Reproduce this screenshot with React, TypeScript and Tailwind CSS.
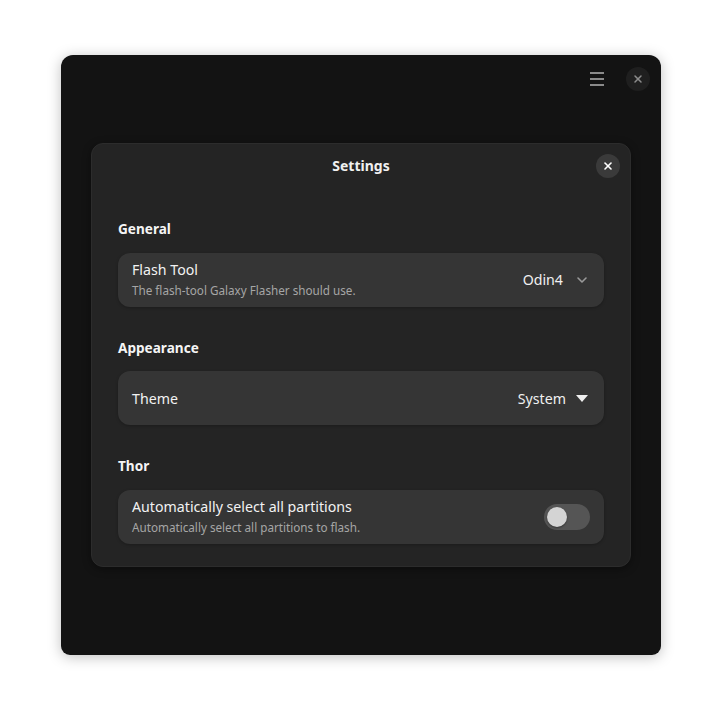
import { X, ChevronDown } from "lucide-react"

function SectionTitle({ children }: { children: string }) {
  return <h2 className="text-[13.6px] font-bold text-[#f5f5f5] leading-none mb-[17px]">{children}</h2>
}

function Row({ title, subtitle, children }: { title: string; subtitle?: string; children: React.ReactNode }) {
  return (
    <div className="flex h-[54px] items-center justify-between rounded-[12px] bg-[#353535] pl-[14px] pr-[14px] shadow-[0_1px_3px_rgba(0,0,0,0.25)]">
      <div className="flex flex-col">
        <span className="text-[14.2px] leading-[19px] text-[#f2f2f2]">{title}</span>
        {subtitle && <span className="mt-[3px] text-[11.7px] leading-[17px] text-[#a6a6a6]">{subtitle}</span>}
      </div>
      {children}
    </div>
  )
}

export default function App() {
  return (
    <div
      className="flex h-[722px] w-[722px] items-start justify-center bg-white pt-[55px]"
      style={{ fontFamily: '"Noto Sans", "Open Sans", sans-serif' }}
    >
      <div className="flex h-[600px] w-[600px] flex-col rounded-t-[12px] rounded-b-[9px] bg-[#131313] shadow-[0_2px_14px_rgba(0,0,0,0.25)]">
        {/* header bar */}
        <div className="flex h-[46px] items-center justify-end gap-[22px] pr-[11px] pt-[2px]">
          <div className="flex flex-col gap-[4px]">
            <span className="block h-[2px] w-[14px] bg-[#8a8a8a]" />
            <span className="block h-[2px] w-[14px] bg-[#8a8a8a]" />
            <span className="block h-[2px] w-[14px] bg-[#8a8a8a]" />
          </div>
          <div className="flex h-[24px] w-[24px] items-center justify-center rounded-full bg-[#1f1f1f]">
            <X className="h-[12px] w-[12px] text-[#8c8c8c]" strokeWidth={3} />
          </div>
        </div>

        {/* dialog */}
        <div className="mx-[30px] mt-[42px] h-[424px] rounded-[12px] border border-[#2c2c2c] bg-[#242424] shadow-[0_2px_8px_rgba(0,0,0,0.4)]">
          <div className="relative flex h-[43px] items-center justify-center">
            <span className="text-[14px] font-bold text-[#f0f0f0]">Settings</span>
            <div className="absolute right-[10px] top-[10px] flex h-[24px] w-[24px] items-center justify-center rounded-full bg-[#3a3a3a]">
              <X className="h-[12px] w-[12px] text-white" strokeWidth={3.2} />
            </div>
          </div>

          <div className="flex flex-col px-[26px] pt-[35px]">
            <SectionTitle>General</SectionTitle>
            <Row title="Flash Tool" subtitle="The flash-tool Galaxy Flasher should use.">
              <div className="flex items-center gap-[11px]">
                <span className="text-[14.2px] text-[#f0f0f0]">Odin4</span>
                <ChevronDown className="h-[16px] w-[16px] text-[#9a9a9a]" strokeWidth={2.4} />
              </div>
            </Row>

            <div className="h-[34px]" />
            <SectionTitle>Appearance</SectionTitle>
            <Row title="Theme">
              <div className="flex items-center gap-[10px]">
                <span className="text-[14.2px] text-[#f0f0f0]">System</span>
                <svg width="12" height="7" viewBox="0 0 12 7" className="mr-[2px]">
                  <path d="M0 0 L12 0 L6 7 Z" fill="#f0f0f0" />
                </svg>
              </div>
            </Row>

            <div className="h-[34px]" />
            <SectionTitle>Thor</SectionTitle>
            <Row title="Automatically select all partitions" subtitle="Automatically select all partitions to flash.">
              <div className="flex h-[26px] w-[46px] items-center rounded-full bg-[#555555] px-[3px]">
                <span className="block h-[20px] w-[20px] rounded-full bg-[#d4d4d4] shadow-[0_1px_2px_rgba(0,0,0,0.4)]" />
              </div>
            </Row>
          </div>
        </div>
      </div>
    </div>
  )
}
